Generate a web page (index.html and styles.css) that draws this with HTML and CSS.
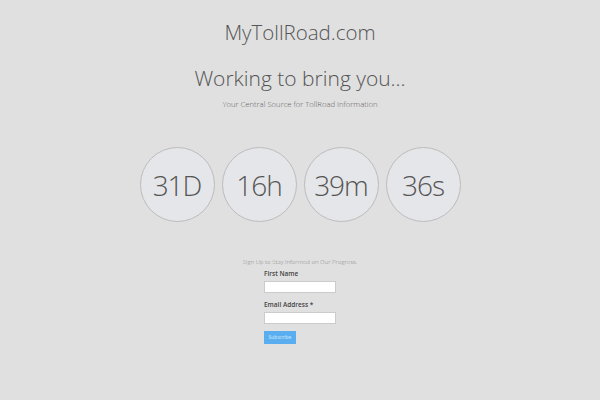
FILE: index.html
```html
<!DOCTYPE html>
<html>
<head>
<meta charset="utf-8">
<link rel="stylesheet" href="styles.css">
</head>
<body>
<div class="page">
  <h1 class="brand">MyTollRoad.com</h1>
  <h2 class="headline">Working to bring you...</h2>
  <p class="tagline">Your Central Source for TollRoad Information</p>
  <div class="countdown">
    <div class="circle">31D</div>
    <div class="circle">16h</div>
    <div class="circle">39m</div>
    <div class="circle">36s</div>
  </div>
  <div class="signup">
    <p class="signup-title">Sign Up to Stay Informed on Our Progress.</p>
    <form class="form">
      <label class="label">First Name</label>
      <input class="field" type="text">
      <label class="label">Email Address *</label>
      <input class="field" type="text">
      <button class="btn" type="button">Subscribe</button>
    </form>
  </div>
</div>
</body>
</html>
```
FILE: styles.css
```css
html, body {
  margin: 0;
  padding: 0;
  background: #e0e0e0;
}
body {
  font-family: "Open Sans", "Liberation Sans", sans-serif;
  color: #555;
  width: 600px;
  height: 400px;
  overflow: hidden;
}
.page {
  display: flex;
  flex-direction: column;
  align-items: center;
}
.brand {
  margin: 17px 0 0;
  font-size: 20.5px;
  font-weight: 300;
  line-height: 30px;
  color: #555;
}
.headline {
  margin: 15px 0 0;
  font-size: 21px;
  font-weight: 300;
  line-height: 32px;
  color: #555;
}
.tagline {
  margin: 4px 0 0;
  font-size: 7.7px;
  font-weight: 300;
  color: #666;
  line-height: 12px;
}
.countdown {
  display: flex;
  gap: 7px;
  margin-top: 37px;
}
.circle {
  width: 73px;
  height: 73px;
  border: 1px solid #bcbcbc;
  border-radius: 50%;
  background: #e5e6e9;
  display: flex;
  align-items: center;
  justify-content: center;
  font-size: 28px;
  letter-spacing: -1px;
  font-weight: 300;
  color: #555;
}
.signup {
  margin-top: 35px;
  display: flex;
  flex-direction: column;
  align-items: center;
}
.signup-title {
  margin: 0;
  font-size: 6px;
  color: #888;
  font-weight: 300;
  line-height: 10px;
}
.form {
  display: flex;
  flex-direction: column;
  align-items: flex-start;
  width: 72px;
  margin-top: 2px;
}
.label {
  font-size: 6.5px;
  font-weight: 600;
  color: #444;
  line-height: 10px;
}
.field {
  width: 72px;
  height: 12px;
  box-sizing: border-box;
  border: 1px solid #ccc;
  background: #fff;
  margin: 2px 0 7px;
  padding: 0;
}
.btn {
  margin-top: 0;
  width: 32px;
  height: 13px;
  padding: 0;
  border: none;
  background: #5aaef0;
  color: #d8ecfc;
  font-family: "Open Sans", "Liberation Sans", sans-serif;
  font-size: 5px;
  line-height: 13px;
}
```
